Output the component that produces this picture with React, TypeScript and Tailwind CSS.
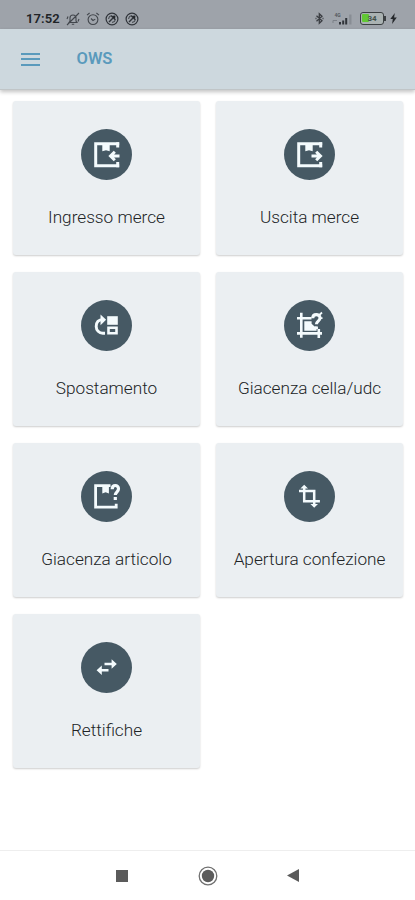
import type { ReactNode } from 'react';

const white = '#f4fbfd';

function BoxIcon({ children }: { children?: ReactNode }) {
  return (
    <>
      <path d="M38.2 14.7H14.7V36.7H38.2" fill="none" stroke={white} strokeWidth="3" />
      <path d="M21.3 14h7.4v8.2l-3.7-1-3.7 1z" fill={white} />
      {children}
    </>
  );
}

const items: { label: string; icon: ReactNode }[] = [
  {
    label: 'Ingresso merce',
    icon: (
      <BoxIcon>
        <path d="M36.7 13.2v5.3M36.7 33v5.2" stroke={white} strokeWidth="3" />
        <path d="M38.5 27H30M33.8 22.7L29.5 27l4.3 4.3" fill="none" stroke={white} strokeWidth="3" />
      </BoxIcon>
    ),
  },
  {
    label: 'Uscita merce',
    icon: (
      <BoxIcon>
        <path d="M36.7 13.2v5.3M36.7 33v5.2" stroke={white} strokeWidth="3" />
        <path d="M27.5 27h8.5M32.2 22.7L36.5 27l-4.3 4.3" fill="none" stroke={white} strokeWidth="3" />
      </BoxIcon>
    ),
  },
  {
    label: 'Spostamento',
    icon: (
      <>
        <path d="M24 33.2h-2.2a6.8 6.8 0 0 1-6.6-6.8c0-4.2 2.6-6.8 7-6.8" fill="none" stroke={white} strokeWidth="2.9" />
        <path d="M19.5 14.6l5.6 5.2-5.6 5.4z" fill={white} />
        <path d="M26.2 16.2h10.6v8.6H26.2z" fill={white} />
        <path d="M27.5 27.7h8v5.6h-8z" fill="none" stroke={white} strokeWidth="2.6" />
      </>
    ),
  },
  {
    label: 'Giacenza cella/udc',
    icon: (
      <>
        <path d="M17.3 12.8v25M34.8 29v9M13 18.2h14.5M13 33.4h25" fill="none" stroke={white} strokeWidth="2.6" />
        <path d="M20.3 21.3h7.3v2.5l3 2.7h2v4.3H20.3z" fill={white} />
        <path d="M28.7 18.3c0-5 7.3-4.7 7.3-.4 0 3.2-3.6 3.2-3.6 6.4M32.4 26.5v2.6" fill="none" stroke={white} strokeWidth="3.1" />
        <path d="M34.8 15.5l3.2-3M36 18.2h2.5" stroke={white} strokeWidth="1.8" />
      </>
    ),
  },
  {
    label: 'Giacenza articolo',
    icon: (
      <>
        <path d="M29.5 14.6H14.6v21.6h20.6v-3.5" fill="none" stroke={white} strokeWidth="2.8" />
        <path d="M21.3 14h6.6v8.5l-3.3-1.3-3.3 1.3z" fill={white} />
        <path d="M31.2 18.3c0-5.2 6.3-4.8 6.3-.5 0 3.3-3.2 3.2-3.2 6.3M34.3 26v3.1" fill="none" stroke={white} strokeWidth="3.2" />
      </>
    ),
  },
  {
    label: 'Apertura confezione',
    icon: (
      <>
        <path d="M20.2 15.5v14.8h15.7M15 20h15.2v15" fill="none" stroke={white} strokeWidth="2.5" />
        <path d="M16.4 17.5l3.8-3.7 3.8 3.7zM26.4 33l3.8 3.7L34 33z" fill={white} />
      </>
    ),
  },
  {
    label: 'Rettifiche',
    icon: (
      <>
        <path d="M23.5 22h8M19.5 28.3h8" stroke={white} strokeWidth="2.6" />
        <path d="M30.6 17.3l5.2 4.7-5.2 4.7zM20.8 23.6l-5.2 4.7 5.2 4.7z" fill={white} />
      </>
    ),
  },
];

function CompassIcon() {
  return (
    <svg className="size-[14px]" viewBox="0 0 14 14" fill="none" stroke="#30343a">
      <circle cx="7" cy="7" r="5.9" strokeWidth="1.2" />
      <path d="M3.6 7A3.4 3.4 0 0 1 7 3.6M10.4 7A3.4 3.4 0 0 1 7 10.4" strokeWidth="0.9" />
      <path d="M6 4.2l4.2-.4-.4 4.2z" fill="#24272b" strokeWidth="0.5" />
      <path d="M8 6L4 10" strokeWidth="1.5" />
    </svg>
  );
}

function StatusBar() {
  return (
    <div className="flex h-[29px] shrink-0 items-center justify-between bg-[#9ea3aa] pt-[8px] pr-[18px] pl-[26px]">
      <div className="flex items-center">
        <span className="w-[40px] text-[13px] leading-none font-semibold tracking-[0.1px] text-[#202327]">17:52</span>
        <div className="flex items-center gap-[5.5px]">
          <svg className="size-[14px]" viewBox="0 0 14 14" fill="none" stroke="#42464c" strokeWidth="1.1">
            <path d="M3 10.5l1-1.5V6a3 3 0 0 1 6 0v3l1 1.5zM5.8 12.3h2.4M1 13L13 1M1 7l1-2.5M12 9.5l1-2.5" />
          </svg>
          <svg className="size-[14px]" viewBox="0 0 14 14" fill="none" stroke="#42464c" strokeWidth="1.1">
            <circle cx="7" cy="7.6" r="4.9" />
            <path d="M1 3.2L3.6 1M13 3.2L10.4 1M5 6.5l2 2 2.3-1.4" />
          </svg>
          <CompassIcon />
          <CompassIcon />
        </div>
      </div>
      <div className="flex items-center">
        <svg className="mr-[8px] h-[13px] w-[9px]" viewBox="0 0 9 13" fill="none" stroke="#3b3e43" strokeWidth="1.3">
          <path d="M1.5 3.7l5.5 5-2.7 2.6V1.7L7 4.3l-5.5 5M.5 6.5h1M7.5 6.5h1" />
        </svg>
        <svg className="mr-[7px] h-[14px] w-[21px]" viewBox="0 0 21 14">
          <text x="2.5" y="5" fontSize="5" fontWeight="700" fill="#55595f">4G</text>
          <path d="M1 11V8.5h4" fill="none" stroke="#7b8087" />
          <path d="M7 10h2v2.5H7zM10.2 8.5h2v4h-2zM13.2 6h2v6.5h-2z" fill="#30343a" />
          <path d="M17.2 2.5h2.3v10h-2.3z" fill="#888d94" />
        </svg>
        <div className="relative mr-[6px] flex h-[13px] w-[24px] items-center justify-center rounded-[3px] border-[1.5px] border-[#3b3f42] bg-[#aab2b2]">
          <div className="absolute top-px left-px h-[8px] w-[7px] rounded-[1px] bg-[#62c834]" />
          <span className="relative text-[8px] leading-none font-bold text-[#42514a]">34</span>
          <div className="absolute -right-[3px] h-[5px] w-[2px] bg-[#3b3f42]" />
        </div>
        <svg className="h-[11px] w-[7px]" viewBox="0 0 7 11">
          <path d="M4.8 0L.3 6h2.5l-.7 5L6.8 4.6H4.1z" fill="#25282c" />
        </svg>
      </div>
    </div>
  );
}

export default function App() {
  return (
    <div className="flex h-[900px] w-[415px] flex-col bg-white font-[Roboto,sans-serif]">
      <StatusBar />

      {/* Header */}
      <header className="flex h-[61px] shrink-0 items-center border-b border-[#c0c5c7] bg-[#cdd8de] pl-[20.5px] shadow-[0_2px_4px_rgba(0,0,0,0.24)]">
        <button className="flex w-[19px] flex-col gap-[3.5px]" aria-label="Menu">
          <span className="h-[2px] w-full bg-[#5a9abc]" />
          <span className="h-[2px] w-full bg-[#5a9abc]" />
          <span className="h-[2px] w-full bg-[#5a9abc]" />
        </button>
        <h1 className="ml-[37px] text-[16.5px] font-semibold text-[#5a9abc]">OWS</h1>
      </header>

      {/* Menu cards */}
      <main className="grid grid-cols-[187px_187px] content-start gap-x-[16px] gap-y-[17px] pt-[11px] pl-[13px]">
        {items.map((item) => (
          <button
            key={item.label}
            className="flex h-[154px] flex-col items-center rounded-[3px] bg-[#ebeff2] pt-[27.5px] shadow-[0_1px_2px_rgba(0,0,0,0.2)]"
          >
            <svg className="size-[51px] shrink-0" viewBox="0 0 51 51">
              <circle cx="25.5" cy="25.5" r="25.5" fill="#465964" />
              {item.icon}
            </svg>
            <span className="mt-[25.5px] text-[17.2px] leading-[24px] font-light whitespace-nowrap text-[#202325]">
              {item.label}
            </span>
          </button>
        ))}
      </main>

      {/* System navigation */}
      <nav className="mt-auto flex h-[50px] shrink-0 items-center border-t border-[#eeeeee] pl-[116px]">
        <div className="size-[12px] bg-[#5b5b5b]" />
        <svg className="ml-[69.5px] size-[20px]" viewBox="0 0 20 20">
          <circle cx="10" cy="10" r="8.8" fill="none" stroke="#707070" strokeWidth="1.3" />
          <circle cx="10" cy="10" r="6.2" fill="#5b5b5b" />
        </svg>
        <svg className="ml-[69px] h-[13px] w-[12px]" viewBox="0 0 12 13">
          <path d="M12 0v13L0 6.5z" fill="#5b5b5b" />
        </svg>
      </nav>
    </div>
  );
}
